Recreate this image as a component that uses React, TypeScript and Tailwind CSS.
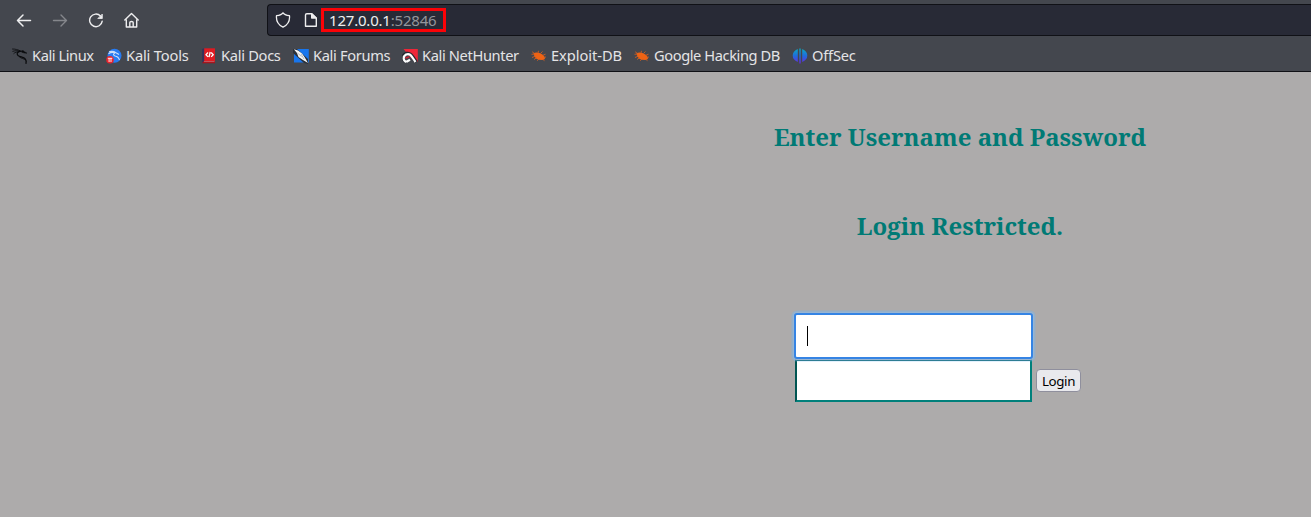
import type { ReactNode } from "react";

const svg = "block size-4 shrink-0";

const Dragon = () => (
  <svg className={svg} viewBox="0 0 16 16" fill="none" stroke="#090a0c" strokeLinecap="round">
    <path d="M.5 1C3 1 6 1.500 9 3.200M.8 3.300C4 2.300 6 2.500 8.500 3.500M1.800 5.500C3 4.200 5 3.700 7 3.800" strokeWidth=".8" />
    <path d="M8 3.200C5 4 4.500 6 6 7.500C8 9.200 11.500 8.500 13.300 10.800C14.300 12 14.300 13.500 14 15.300" strokeWidth="1.200" />
    <path d="M9 3L11 2.500L12.500 3.700L15 5.200L12.500 5L10 4.300z" fill="#090a0c" strokeWidth=".5" />
    <path d="M7.500 9C9 10.500 12 10.300 13.500 12" strokeWidth=".9" />
  </svg>
);

const Tools = () => (
  <svg className={svg} viewBox="0 0 16 16" fill="none">
    <circle cx="8.500" cy="7.800" r="7" fill="#267bf2" />
    <path d="M3 3.800Q7 2.600 10 4.700L13 6.500M2.500 5.800Q6 3.500 9 5M9 5Q6 6.500 9 8Q12.500 8.500 13.500 12" stroke="#c9ddf8" strokeWidth="1.100" />
    <circle cx="4" cy="11.800" r="3.800" fill="#e8242c" />
    <path d="M1.800 10.300H6.300M3.100 10.300V14M5 10.300V14" stroke="#fff" strokeWidth=".9" />
  </svg>
);

const Docs = () => (
  <svg className={svg} viewBox="0 0 16 16" fill="none">
    <path d="M3 .3H14V13H3z" fill="#df1b22" />
    <path d="M1 1L3.200.3V13L1 15z" fill="#34335a" />
    <path d="M3 13H14V15.300H1z" fill="#a90f17" />
    <path d="M3 13.600H13.500" stroke="#d99498" strokeWidth=".6" />
    <path d="M7 4.500L5 6.700L7 8.900M10.200 4.500L12.200 6.700L10.200 8.900M9.200 4L8 9.200" stroke="#fff" strokeWidth="1.300" />
  </svg>
);

const Forums = () => (
  <svg className={svg} viewBox="0 0 16 16" fill="none">
    <path d="M1 1H15.800V14.500H1z" fill="#1876ed" />
    <path d="M0 1L4 1L15 11V16L11 15L0 5z" fill="#2b3039" />
    <path d="M.8 1.300L5 2.500L9 5.500L11.500 9L15 15L10 12L5.500 9L4 5z" fill="#f4f5f5" />
    <path d="M4.500 5L8.500 8.500M8 6L11 11" stroke="#9ba2ab" strokeWidth=".7" />
  </svg>
);

const NetHunter = () => (
  <svg className={svg} viewBox="0 0 16 16" fill="none">
    <path d="M1.500 1H15.800V14L8 9z" fill="#ee2638" />
    <path d="M3 13.500C-.5 10 .5 6.500 4.500 5.300C8.500 4.300 10.500 8 14.500 14" stroke="#252a31" strokeWidth="3" />
    <path d="M4.500 14C.8 12.500 .8 8.500 4 6.500C8.500 4.500 10 9 13.500 14M4.500 13.700L8 11.800" stroke="#fff" strokeWidth="2.200" />
    <path d="M3.300 10L7 9" stroke="#cf2134" strokeWidth="1.500" />
  </svg>
);

const Bug = () => (
  <svg className={svg} viewBox="0 0 16 16" fill="none">
    <path d="M2.500 5.200Q5 3.800 8.500 5Q12 6 13.300 8.500L14 11L11.300 12Q7.500 12 5 10.500Q3 8.700 2.500 5.200z" fill="#ef6314" />
    <path d="M3.500 5.500L1.200 3.800M4 6L.5 6.300M4.800 8L1 9.500M6 9.500L3 11.500M8 11L6 12.700M7 5L7.500 2.800M9.500 5.500L11.500 3.500M11.500 7.500L14.500 6.200M12.500 9.500L15 9M12 11.500L13.500 12.700" stroke="#df601c" strokeWidth=".8" />
  </svg>
);

const OffSec = () => (
  <svg className={svg} viewBox="0 0 16 16">
    <defs>
      <linearGradient id="brand" x1="0" y1="0" x2="0" y2="1">
        <stop stopColor="#08abc2" />
        <stop offset=".5" stopColor="#216bdc" />
        <stop offset="1" stopColor="#6729df" />
      </linearGradient>
    </defs>
    <path d="M5.800 1V13.900Q.7 12 .7 7.500Q.7 3 5.800 1zM7.300.5H8.700V15.500H7.300zM10.200 1Q15.300 3 15.300 7.500Q15.300 12 10.200 13.900z" fill="url(#brand)" />
  </svg>
);

const bookmarks: { name: string; icon: ReactNode; width: string }[] = [
  { name: "Kali Linux", icon: <Dragon />, width: "w-[94px] tracking-[-0.44px]" },
  { name: "Kali Tools", icon: <Tools />, width: "w-[95px] tracking-[-0.16px]" },
  { name: "Kali Docs", icon: <Docs />, width: "w-[92px] tracking-[-0.3px]" },
  { name: "Kali Forums", icon: <Forums />, width: "w-[109px] tracking-[-0.34px]" },
  { name: "Kali NetHunter", icon: <NetHunter />, width: "w-[129px] tracking-[-0.37px]" },
  { name: "Exploit-DB", icon: <Bug />, width: "w-[103px] tracking-[-0.05px]" },
  { name: "Google Hacking DB", icon: <Bug />, width: "w-[158px] tracking-[-0.42px]" },
  { name: "OffSec", icon: <OffSec />, width: "w-[80px] tracking-[-0.2px]" },
];

export default function App() {
  return (
    <div className="flex h-[517px] w-full flex-col overflow-hidden bg-[#adabab] font-['Noto_Sans',sans-serif]">
      <header className="h-[72px] shrink-0 border-b border-[#101116] bg-[#44474e]">
        <nav className="flex h-10 items-center pl-4 text-[#eeeeef]">
          <div className="flex w-[251px] gap-5">
            <svg className={svg} viewBox="0 0 16 16" fill="none" stroke="currentColor" strokeWidth="1.500" strokeLinecap="round" strokeLinejoin="round"><path d="M14.500 8.500H1.500M7 3L1.500 8.500L7 14" /></svg>
            <svg className="block size-4 shrink-0 text-[#85878c]" viewBox="0 0 16 16" fill="none" stroke="currentColor" strokeWidth="1.400" strokeLinecap="round" strokeLinejoin="round"><path d="M1.500 8.500H14.500M9 3L14.500 8.500L9 14" /></svg>
            <svg className="block size-4 shrink-0" viewBox="0 0 16 16" fill="none" stroke="currentColor" strokeWidth="1.400" strokeLinecap="round"><path d="M12.500 4A6.300 6.300 0 1 0 14.200 9.200" /><path d="M14.300 2.400V6.500H10.200z" fill="currentColor" strokeWidth=".8" strokeLinejoin="round" /></svg>
            <svg className={svg} viewBox="0 0 16 16" fill="none" stroke="currentColor" strokeWidth="1.400" strokeLinecap="round" strokeLinejoin="round"><path d="M.8 8L7.500 1.500L14.200 8M2.300 7.500V15H12.700V7.500M5.800 14.500V10.500Q5.800 9.500 7.500 9.500Q9.200 9.500 9.200 10.500V14.500" /></svg>
          </div>
          <div className="flex h-8 flex-1 items-center rounded-l-[4px] border border-r-0 border-[#101116] bg-[#282a36] pl-[7px]">
            <svg className={svg} viewBox="0 0 16 16" fill="none" stroke="currentColor" strokeWidth="1.300" strokeLinejoin="round"><path d="M8 .8Q9.300 2.800 14.500 3.700Q15.300 11.500 8 15.200Q.7 11.500 1.500 3.700Q6.700 2.800 8 .8z" /></svg>
            <svg className="ml-3 block size-4 shrink-0" viewBox="0 0 16 16" fill="none" stroke="currentColor" strokeWidth="1.400" strokeLinejoin="round"><path d="M3.800 1.700H8.700L13.300 6V14.300H2.500V3Q2.500 1.700 3.800 1.700z" /><path d="M8.700 1.700V6H13z" fill="currentColor" /></svg>
            <div className="ml-[2px] flex h-6 w-[125px] items-center border-3 border-[#fb0207] pl-[5px] text-[15px] tracking-[-0.2px] whitespace-nowrap">
              <span>127.0.0.1</span><span className="text-[#94959b]">:52846</span>
            </div>
          </div>
        </nav>
        <div className="flex h-[31px] items-center pl-3 text-[14.670px] text-[#e4e4e6]">
          {bookmarks.map((item) => (
            <div key={item.name} className={`flex shrink-0 items-center gap-1 whitespace-nowrap ${item.width}`}>
              {item.icon}<span className="pb-[2px] leading-5">{item.name}</span>
            </div>
          ))}
        </div>
      </header>
      <main className="ml-[649px] flex w-[622px] flex-col items-center pt-12">
        <h1 className="h-[89px] font-['Noto_Serif','Droid_Serif','DejaVu_Serif',serif] text-2xl leading-[33px] font-bold whitespace-nowrap text-[#007a75]">Enter Username and Password</h1>
        <h2 className="h-[104px] font-['Noto_Serif','Droid_Serif','DejaVu_Serif',serif] text-2xl leading-[33px] font-bold whitespace-nowrap text-[#007a75]">Login Restricted.</h2>
        <form className="mr-[2px] flex w-[330px] items-end" onSubmit={(event) => event.preventDefault()}>
          <div className="w-[239px] shrink-0">
            <div className="relative z-10 flex h-[46px] items-center rounded-[3px] border-2 border-[#3584e4] bg-white pl-[11px] shadow-[0_0_0_1px_#99b5d2,0_0_0_2.500px_#72b8f466]">
              <span className="h-5 w-px bg-black" />
            </div>
            <input aria-label="Password" type="password" className="ml-px block h-[43px] w-[237px] border-2 border-t-[#005552] border-r-[#00807b] border-b-[#00807b] border-l-[#005552] bg-white px-3 outline-none" />
          </div>
          <button className="mb-[10px] ml-[3px] flex h-[23px] w-[45px] items-center justify-center rounded-[4px] border border-[#8f8f9d] bg-[#e9e9ed] pt-[2px] text-[13.333px] tracking-[-0.35px] text-black">Login</button>
        </form>
      </main>
    </div>
  );
}
